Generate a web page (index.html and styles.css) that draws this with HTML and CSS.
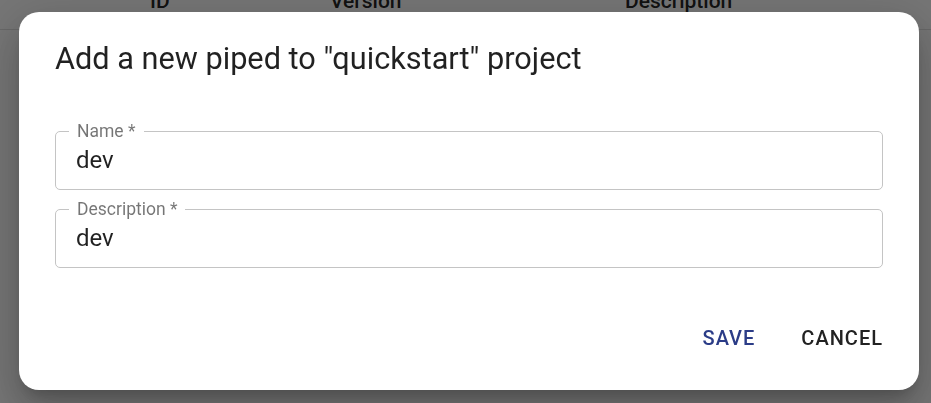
FILE: index.html
```html
<!DOCTYPE html>
<html>
<head>
<meta charset="utf-8">
<link rel="stylesheet" href="styles.css">
</head>
<body>
<div class="page">
  <div class="table-head">
    <span class="th th-id">ID</span>
    <span class="th th-version">Version</span>
    <span class="th th-desc">Description</span>
  </div>
</div>
<div class="backdrop">
  <div class="dialog">
    <h2 class="title">Add a new piped to "quickstart" project</h2>
    <div class="fields">
      <div class="field">
        <span class="label">Name *</span>
        <div class="value">dev</div>
      </div>
      <div class="field">
        <span class="label">Description *</span>
        <div class="value">dev</div>
      </div>
    </div>
    <div class="actions">
      <button class="btn btn-save">SAVE</button>
      <button class="btn btn-cancel">CANCEL</button>
    </div>
  </div>
</div>
</body>
</html>
```
FILE: styles.css
```css
html, body {
  margin: 0;
  padding: 0;
  height: 100%;
  overflow: hidden;
  font-family: Roboto, "Liberation Sans", sans-serif;
  background: #fff;
}
.page {
  height: 100%;
}
.table-head {
  height: 29px;
  border-bottom: 1px solid #e0e0e0;
  position: relative;
}
.th {
  position: absolute;
  top: -11px;
  font-size: 21px;
  font-weight: 500;
  color: rgba(0,0,0,0.87);
  line-height: 24px;
}
.th-id { left: 150px; }
.th-version { left: 330px; }
.th-desc { left: 625px; }
.backdrop {
  position: fixed;
  inset: 0;
  background: rgba(0,0,0,0.54);
  display: flex;
  align-items: flex-start;
  padding: 12px 0 0 19px;
  box-sizing: border-box;
}
.dialog {
  width: 900px;
  height: 378px;
  background: #fff;
  border-radius: 20px;
  box-shadow: 0 11px 15px -7px rgba(0,0,0,0.2), 0 24px 38px 3px rgba(0,0,0,0.14), 0 9px 46px 8px rgba(0,0,0,0.12);
  box-sizing: border-box;
  padding: 0 36px;
  display: flex;
  flex-direction: column;
}
.title {
  margin: 0;
  padding-top: 28px;
  font-size: 30.7px;
  font-weight: 400;
  line-height: 38px;
  color: rgba(0,0,0,0.87);
}
.fields {
  margin-top: 53px;
  display: flex;
  flex-direction: column;
  gap: 19px;
}
.field {
  position: relative;
  height: 59px;
  border: 1px solid #c4c4c4;
  border-radius: 5px;
  box-sizing: border-box;
}
.label {
  position: absolute;
  top: -12px;
  left: 13px;
  padding: 0 8px 0 8px;
  background: #fff;
  font-size: 17.5px;
  line-height: 22px;
  color: rgba(0,0,0,0.54);
}
.value {
  padding: 13px 20px 0;
  font-size: 24px;
  line-height: 30px;
  color: rgba(0,0,0,0.87);
}
.actions {
  margin-top: auto;
  margin-bottom: 40px;
  display: flex;
  justify-content: flex-end;
  gap: 46px;
}
.btn {
  background: none;
  border: 0;
  padding: 0;
  font-family: Roboto, "Liberation Sans", sans-serif;
  font-size: 20px;
  font-weight: 500;
  letter-spacing: 1px;
  line-height: 24px;
}
.btn-save { color: #2b3c87; }
.btn-cancel { color: #222; }
```
